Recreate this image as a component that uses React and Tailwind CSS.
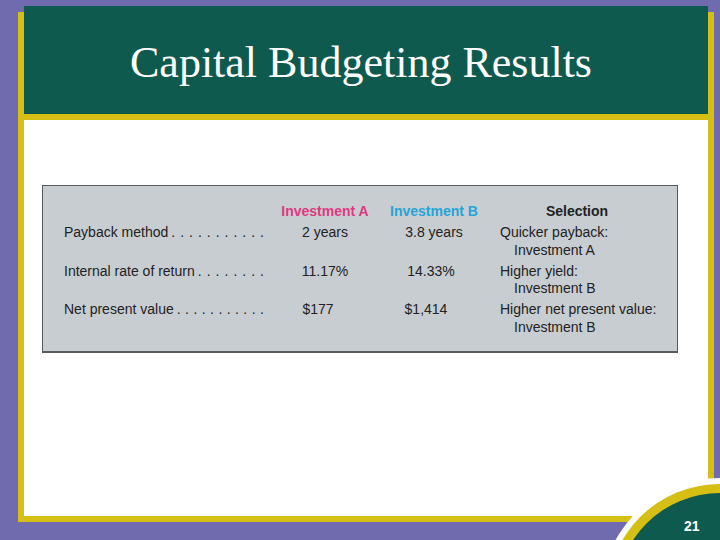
import React from "react";

const rows = [
  {
    label: "Payback method",
    dots: 11,
    a: "2 years",
    aShift: "",
    b: "3.8 years",
    bShift: "",
    sel: "Quicker payback:",
    pick: "Investment A",
  },
  {
    label: "Internal rate of return",
    dots: 8,
    a: "11.17%",
    aShift: "",
    b: "14.33%",
    bShift: "pr-[6px]",
    sel: "Higher yield:",
    pick: "Investment B",
  },
  {
    label: "Net present value",
    dots: 11,
    a: "$177",
    aShift: "pr-[14px]",
    b: "$1,414",
    bShift: "pr-[16px]",
    sel: "Higher net present value:",
    pick: "Investment B",
  },
];

const ResultRow = ({ row }) => (
  <div className="flex h-[35px] leading-[17.5px]">
    <div className="w-[216px] pr-[16px] flex">
      <span>{row.label}</span>
      <span className="flex-1 flex justify-between pl-[3px]">
        {Array.from({ length: row.dots }).map((_, i) => (
          <span key={i}>.</span>
        ))}
      </span>
    </div>
    <div className={`w-[90px] text-center ${row.aShift}`}>{row.a}</div>
    <div className={`w-[128px] text-center ${row.bShift}`}>{row.b}</div>
    <div className="w-[170px] pl-[2px]">
      <div>{row.sel}</div>
      <div className="pl-[14px]">{row.pick}</div>
    </div>
  </div>
);

const App = () => {
  return (
    <div className="relative w-[720px] h-[540px] overflow-hidden bg-[#6f6bae]">
      {/* slide frame */}
      <div className="ml-[18px] mt-[12px] w-[696px] h-[510px] bg-[#d5bf14] px-[6px] pb-[6px] flex flex-col">
        <div className="-mt-[6px] h-[108px] bg-[#0f5a4f] pl-[106px] pt-[35px]">
          <h1
            className="text-white text-[44px] leading-none"
            style={{ fontFamily: '"Liberation Serif", "Times New Roman", serif' }}
          >
            Capital Budgeting Results
          </h1>
        </div>
        <div className="mt-[6px] flex-1 bg-white pt-[65px] pl-[18px]">
          <div
            className="w-[636px] h-[168px] bg-[#c8cdd1] border border-[#5a5a5a] border-b-2 pl-[21px] pt-[16px] text-[14px] text-[#222]"
            style={{ fontFamily: '"Liberation Sans", Arial, sans-serif' }}
          >
            <div className="flex h-[18px] leading-[18px] font-bold text-[14px]">
              <div className="w-[216px]" />
              <div className="w-[90px] text-center text-[#de3a80]">Investment A</div>
              <div className="w-[128px] text-center text-[#22a5d8]">Investment B</div>
              <div className="w-[158px] text-center text-[#222]">Selection</div>
            </div>
            <div className="mt-[4px] flex flex-col gap-[3.5px]">
              {rows.map((r) => (
                <ResultRow key={r.label} row={r} />
              ))}
            </div>
          </div>
        </div>
      </div>

      {/* page number badge */}
      <div className="absolute left-[601px] top-[478px] w-[238px] h-[238px] rounded-full bg-white p-[6px]">
        <div className="w-full h-full rounded-full bg-[#d5bf14] p-[9px]">
          <div className="w-full h-full rounded-full bg-[#0f5a4f]" />
        </div>
      </div>
      <span
        className="absolute left-[684px] top-[519px] text-white font-bold text-[14px] leading-none"
        style={{ fontFamily: '"Liberation Sans", Arial, sans-serif' }}
      >
        21
      </span>
    </div>
  );
};

export default App;
